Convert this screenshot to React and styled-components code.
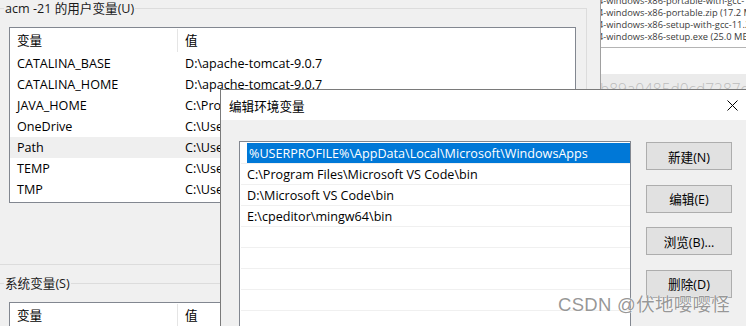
import React from "react";
import styled, { createGlobalStyle } from "styled-components";

const GlobalStyle = createGlobalStyle`
  html, body {
    margin: 0;
    padding: 0;
    background: #f0f0f0;
  }
  body {
    width: 746px;
    height: 326px;
    overflow: hidden;
    font-family: "Open Sans", "Noto Sans CJK SC", sans-serif;
    font-size: 12.6px;
    color: #000;
  }
`;

const Screen = styled.div`
  position: relative;
  display: flex;
  width: 746px;
  height: 326px;
  overflow: hidden;
  background: #f0f0f0;
`;

const LeftPane = styled.div`
  width: 600px;
  flex-shrink: 0;
  display: flex;
  flex-direction: column;
`;

const Group = styled.fieldset`
  margin: ${(p) => p.$top}px 0 0 0;
  padding: 0 0 ${(p) => p.$bottom}px 9px;
  width: 587px;
  box-sizing: border-box;
  border: 1px solid #dcdcdc;
  border-left: none;
  min-width: 0;
`;

const Legend = styled.legend`
  margin-left: -5px;
  padding: 0 1px;
  height: 16px;
  line-height: 17px;
  color: #1a1a1a;
`;

const ListView = styled.div`
  margin-top: 11px;
  width: 567px;
  height: ${(p) => p.$height}px;
  box-sizing: border-box;
  border: 1px solid #828790;
  background: #fff;
  overflow: hidden;
`;

const HeaderRow = styled.div`
  display: grid;
  grid-template-columns: 168px 1fr;
  height: 25px;
  align-items: center;
`;

const HeaderCell = styled.div`
  padding-left: 7px;
  height: 23px;
  line-height: 24px;
  border-right: ${(p) => (p.$divider ? "1px solid #e5e5e5" : "none")};
`;

const Row = styled.div`
  display: grid;
  grid-template-columns: 168px 1fr;
  height: 21px;
  line-height: 22px;
  background: ${(p) => (p.$hot ? "#efefef" : "transparent")};
`;

const Cell = styled.div`
  padding-left: 7px;
  white-space: nowrap;
  overflow: hidden;
`;

const RightPane = styled.div`
  flex: 1;
  display: flex;
  flex-direction: column;
  border-left: 1px solid #a0a0a0;
  overflow: hidden;
`;

const FileList = styled.div`
  background: #fff;
  height: 52px;
  margin-top: -5px;
  border-bottom: 1px solid #b4b4b4;
`;

const FileLine = styled.div`
  margin-left: -3px;
  font-family: "Open Sans", "Liberation Sans", sans-serif;
  font-size: 9.3px;
  line-height: 12px;
  color: #3a3a3a;
  white-space: nowrap;
`;

const Blank = styled.div`
  background: #fff;
  height: 26px;
`;

const HashBand = styled.div`
  flex: 1;
  background: #ebebeb;
  padding-top: 5px;
  margin-left: -1px;
  font-family: "Open Sans", "Liberation Sans", sans-serif;
  font-weight: 300;
  font-size: 15.5px;
  line-height: 20px;
  color: #bdbdbd;
  white-space: nowrap;
`;

const Dialog = styled.div`
  position: absolute;
  left: 220px;
  top: 89px;
  width: 527px;
  height: 260px;
  border: 1px solid #7a7a7a;
  background: #f0f0f0;
  display: flex;
  flex-direction: column;
`;

const TitleBar = styled.div`
  height: 30px;
  background: #fff;
  display: flex;
  align-items: center;
  justify-content: space-between;
  padding: 0 10px 0 8px;
`;

const Title = styled.span`
  color: #000;
`;

const CloseButton = styled.div`
  width: 12px;
  height: 12px;
  display: flex;
  align-items: center;
  justify-content: center;
`;

const DialogBody = styled.div`
  flex: 1;
  display: flex;
  gap: 15px;
  padding: 21px 0 0 18px;
`;

const PathList = styled.div`
  width: 392px;
  height: 200px;
  box-sizing: border-box;
  border: 1px solid #828790;
  background: #fff;
  padding-top: 1px;
`;

const PathItem = styled.div`
  height: 20px;
  line-height: 21px;
  border-bottom: 1px solid #f0f0f0;
  margin: 0 0 0 1px;
  padding-left: ${(p) => (p.$selected ? 2 : 6)}px;
  white-space: nowrap;
`;

const PathText = styled.span`
  display: block;
  height: 20px;
  margin-left: ${(p) => (p.$selected ? 4 : 0)}px;
  padding-left: ${(p) => (p.$selected ? 2 : 0)}px;
  background: ${(p) => (p.$selected ? "#0078d7" : "transparent")};
  color: ${(p) => (p.$selected ? "#fff" : "#000")};
`;

const ButtonColumn = styled.div`
  display: flex;
  flex-direction: column;
  gap: 14.5px;
  margin-top: 1px;
`;

const Button = styled.div`
  width: 86px;
  height: 28px;
  box-sizing: border-box;
  border: 1px solid #adadad;
  background: #e1e1e1;
  display: flex;
  align-items: center;
  justify-content: center;
  color: #000;
`;

const Watermark = styled.div`
  position: absolute;
  left: 558px;
  top: 294px;
  font-family: "Liberation Sans", "Noto Sans CJK SC", sans-serif;
  font-size: 18.5px;
  line-height: 22px;
  letter-spacing: 0.3px;
  color: rgba(105, 105, 105, 0.7);
  text-shadow: 0 0 1px #fff, 0 0 1px #fff;
  white-space: nowrap;
`;

const userVars = [
  ["CATALINA_BASE", "D:\\apache-tomcat-9.0.7"],
  ["CATALINA_HOME", "D:\\apache-tomcat-9.0.7"],
  ["JAVA_HOME", "C:\\Program Files\\Java\\jdk1.8.0_251"],
  ["OneDrive", "C:\\Users\\acm -21\\OneDrive"],
  ["Path", "C:\\Users\\acm -21\\AppData\\Local\\Microsoft"],
  ["TEMP", "C:\\Users\\acm -21\\AppData\\Local\\Temp"],
  ["TMP", "C:\\Users\\acm -21\\AppData\\Local\\Temp"],
];

const paths = [
  "%USERPROFILE%\\AppData\\Local\\Microsoft\\WindowsApps",
  "C:\\Program Files\\Microsoft VS Code\\bin",
  "D:\\Microsoft VS Code\\bin",
  "E:\\cpeditor\\mingw64\\bin",
  "",
  "",
  "",
  "",
  "",
];

const files = [
  "4-windows-x86-portable-with-gcc-11.2.0.zip",
  "4-windows-x86-portable.zip (17.2 MB)",
  "4-windows-x86-setup-with-gcc-11.2.0.exe",
  "4-windows-x86-setup.exe (25.0 MB)",
];

export default function App() {
  return (
    <>
      <GlobalStyle />
      <Screen>
        <LeftPane>
          <Group $top={0} $bottom={61}>
            <Legend>acm -21 的用户变量(U)</Legend>
            <ListView $height={176}>
              <HeaderRow>
                <HeaderCell $divider>变量</HeaderCell>
                <HeaderCell>值</HeaderCell>
              </HeaderRow>
              {userVars.map(([name, value]) => (
                <Row key={name} $hot={name === "Path"}>
                  <Cell>{name}</Cell>
                  <Cell>{value}</Cell>
                </Row>
              ))}
            </ListView>
          </Group>
          <Group $top={10} $bottom={0}>
            <Legend>系统变量(S)</Legend>
            <ListView $height={60}>
              <HeaderRow>
                <HeaderCell $divider>变量</HeaderCell>
                <HeaderCell>值</HeaderCell>
              </HeaderRow>
            </ListView>
          </Group>
        </LeftPane>

        <RightPane>
          <FileList>
            {files.map((f) => (
              <FileLine key={f}>{f}</FileLine>
            ))}
          </FileList>
          <Blank />
          <HashBand>b89a0485d0cd7287c</HashBand>
        </RightPane>

        <Dialog>
          <TitleBar>
            <Title>编辑环境变量</Title>
            <CloseButton>
              <svg width="11" height="11" viewBox="0 0 11 11">
                <path d="M0.5 0.5 L10.5 10.5 M10.5 0.5 L0.5 10.5" stroke="#000" strokeWidth="1" fill="none" />
              </svg>
            </CloseButton>
          </TitleBar>
          <DialogBody>
            <PathList>
              {paths.map((p, i) => (
                <PathItem key={i} $selected={i === 0}>
                  <PathText $selected={i === 0}>{p}</PathText>
                </PathItem>
              ))}
            </PathList>
            <ButtonColumn>
              <Button>新建(N)</Button>
              <Button>编辑(E)</Button>
              <Button>浏览(B)...</Button>
              <Button>删除(D)</Button>
            </ButtonColumn>
          </DialogBody>
        </Dialog>

        <Watermark>CSDN @伏地嘤嘤怪</Watermark>
      </Screen>
    </>
  );
}
